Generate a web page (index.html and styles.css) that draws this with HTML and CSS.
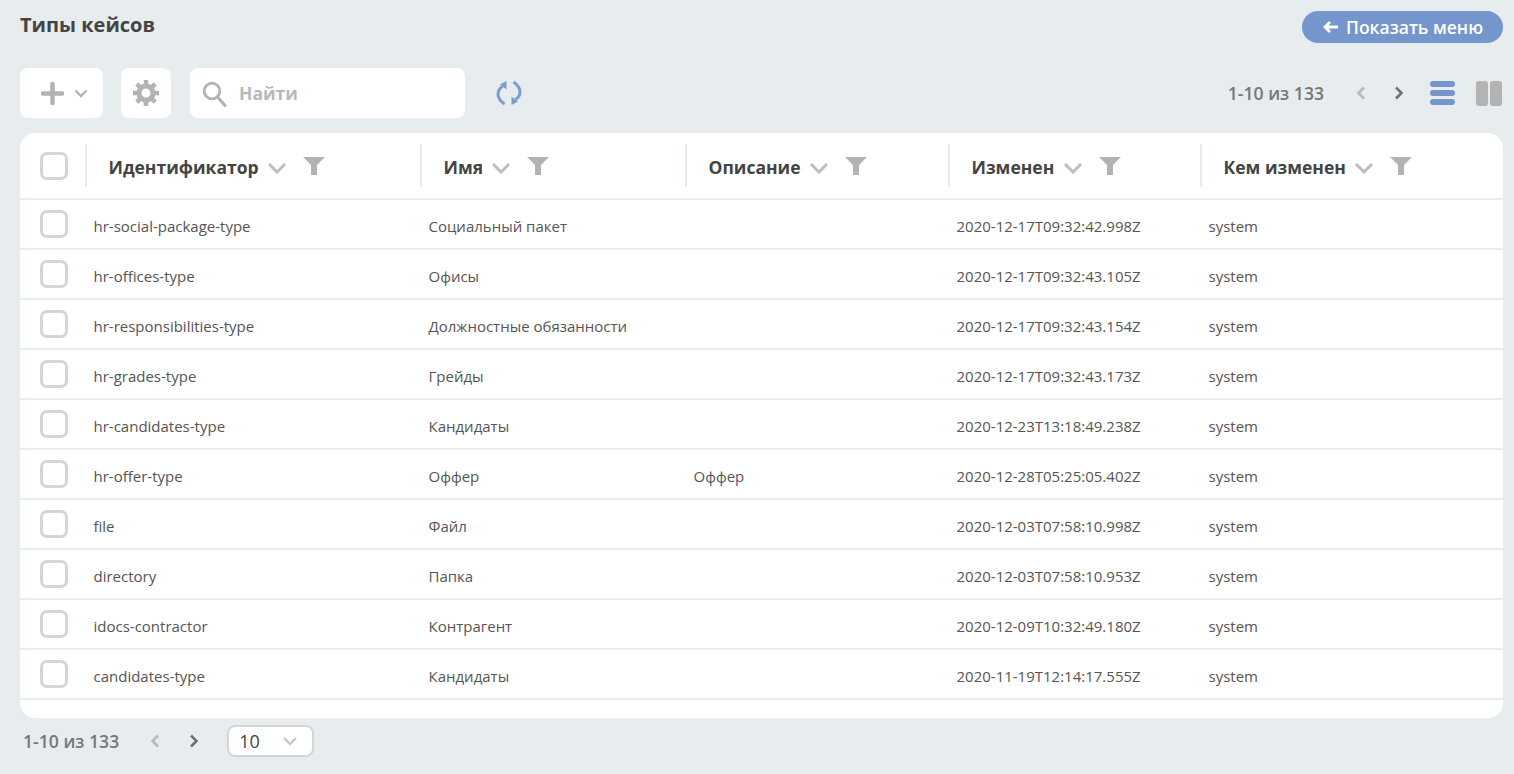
FILE: index.html
```html
<!doctype html>
<html lang="ru">
<head>
<meta charset="utf-8">
<title>Типы кейсов</title>
<link rel="stylesheet" href="styles.css">
</head>
<body>
<div class="topBar">
  <h1 class="pageTitle">Типы кейсов</h1>
  <button class="menuBtn"><svg width="16" height="14" viewBox="0 0 16 14"><path d="M7 2L2 7l5 5M2.500 7H15" fill="none" stroke="#fff" stroke-width="2.800"/></svg>Показать меню</button>
</div>

<div class="toolbar">
  <div class="toolBtn addBtn">
    <svg width="23" height="23" viewBox="0 0 23 23"><path d="M11.500 2v19M2 11.500h19" stroke="#b3b3b3" stroke-width="4.500" stroke-linecap="round"/></svg>
    <svg width="14" height="9" viewBox="0 0 14 9"><path d="M1.500 1.500L7 7l5.500-5.500" fill="none" stroke="#b3b3b3" stroke-width="2.400"/></svg>
  </div>
  <div class="toolBtn gearBtn">
    <svg width="26" height="26" viewBox="0 0 26 26"><circle cx="13" cy="13" r="7" fill="none" stroke="#b3b3b3" stroke-width="5"/><path d="M13 0v26M0 13h26M3.800 3.800l18.400 18.400M22.200 3.800L3.800 22.200" stroke="#b3b3b3" stroke-width="4.500" stroke-dasharray="5 16"/></svg>
  </div>
  <div class="searchBox">
    <svg width="26" height="28" viewBox="0 0 26 28"><circle cx="10" cy="12" r="7.800" fill="none" stroke="#b3b3b3" stroke-width="2.800"/><path d="M15.500 18l7.500 8.500" stroke="#b3b3b3" stroke-width="3" stroke-linecap="round"/></svg>
    <span class="searchHint">Найти</span>
  </div>
  <svg class="reload" width="26" height="26" viewBox="0 0 26 26"><path d="M6.500 6.500C3.500 8.500 2 11 2 14c0 3.800 2.500 7.300 6.500 10" fill="none" stroke="#7b9ccf" stroke-width="3"/><path d="M10.500 1v8.500L4 4.500z" fill="#7b9ccf"/><path d="M19.500 19.500c3-2 4.500-4.500 4.500-7.500 0-3.800-2.500-7.300-6.500-10" fill="none" stroke="#7b9ccf" stroke-width="3"/><path d="M15.500 25v-8.500l6.500 5z" fill="#7b9ccf"/></svg>
  <div class="toolRight">
    <span class="pageInfo">1-10 из 133</span>
    <div class="pageArrows">
      <svg width="10" height="14" viewBox="0 0 10 14"><path d="M8 1.500L2.500 7 8 12.500" fill="none" stroke="#b9b9b9" stroke-width="2.500"/></svg>
      <svg width="10" height="14" viewBox="0 0 10 14"><path d="M2 1.500L7.500 7 2 12.500" fill="none" stroke="#6f6f6f" stroke-width="2.500"/></svg>
    </div>
    <div class="viewList"><i></i><i></i><i></i></div>
    <div class="viewCols"><i></i><i></i></div>
  </div>
</div>

<div class="card">
  <table class="grid">
    <colgroup><col class="c0"><col class="c1"><col class="c2"><col class="c3"><col class="c4"><col></colgroup>
    <thead>
      <tr>
        <th><span class="check"></span></th>
        <th><div class="head">Идентификатор <svg class="chev" width="20" height="12" viewBox="0 0 20 12"><path d="M2 2l8 8 8-8" fill="none" stroke="#bdbdbd" stroke-width="3"/></svg><svg class="funnel" width="22" height="18" viewBox="0 0 22 18"><path d="M0 0h22l-8 8v10H8V8z" fill="#b3b3b3"/></svg></div></th>
        <th><div class="head">Имя <svg class="chev" width="20" height="12" viewBox="0 0 20 12"><path d="M2 2l8 8 8-8" fill="none" stroke="#bdbdbd" stroke-width="3"/></svg><svg class="funnel" width="22" height="18" viewBox="0 0 22 18"><path d="M0 0h22l-8 8v10H8V8z" fill="#b3b3b3"/></svg></div></th>
        <th><div class="head">Описание <svg class="chev" width="20" height="12" viewBox="0 0 20 12"><path d="M2 2l8 8 8-8" fill="none" stroke="#bdbdbd" stroke-width="3"/></svg><svg class="funnel" width="22" height="18" viewBox="0 0 22 18"><path d="M0 0h22l-8 8v10H8V8z" fill="#b3b3b3"/></svg></div></th>
        <th><div class="head">Изменен <svg class="chev" width="20" height="12" viewBox="0 0 20 12"><path d="M2 2l8 8 8-8" fill="none" stroke="#bdbdbd" stroke-width="3"/></svg><svg class="funnel" width="22" height="18" viewBox="0 0 22 18"><path d="M0 0h22l-8 8v10H8V8z" fill="#b3b3b3"/></svg></div></th>
        <th><div class="head">Кем изменен <svg class="chev" width="20" height="12" viewBox="0 0 20 12"><path d="M2 2l8 8 8-8" fill="none" stroke="#bdbdbd" stroke-width="3"/></svg><svg class="funnel" width="22" height="18" viewBox="0 0 22 18"><path d="M0 0h22l-8 8v10H8V8z" fill="#b3b3b3"/></svg></div></th>
      </tr>
    </thead>
    <tbody>
      <tr><td><span class="check"></span></td><td>hr-social-package-type</td><td>Социальный пакет</td><td></td><td>2020-12-17T09:32:42.998Z</td><td>system</td></tr>
      <tr><td><span class="check"></span></td><td>hr-offices-type</td><td>Офисы</td><td></td><td>2020-12-17T09:32:43.105Z</td><td>system</td></tr>
      <tr><td><span class="check"></span></td><td>hr-responsibilities-type</td><td>Должностные обязанности</td><td></td><td>2020-12-17T09:32:43.154Z</td><td>system</td></tr>
      <tr><td><span class="check"></span></td><td>hr-grades-type</td><td>Грейды</td><td></td><td>2020-12-17T09:32:43.173Z</td><td>system</td></tr>
      <tr><td><span class="check"></span></td><td>hr-candidates-type</td><td>Кандидаты</td><td></td><td>2020-12-23T13:18:49.238Z</td><td>system</td></tr>
      <tr><td><span class="check"></span></td><td>hr-offer-type</td><td>Оффер</td><td>Оффер</td><td>2020-12-28T05:25:05.402Z</td><td>system</td></tr>
      <tr><td><span class="check"></span></td><td>file</td><td>Файл</td><td></td><td>2020-12-03T07:58:10.998Z</td><td>system</td></tr>
      <tr><td><span class="check"></span></td><td>directory</td><td>Папка</td><td></td><td>2020-12-03T07:58:10.953Z</td><td>system</td></tr>
      <tr><td><span class="check"></span></td><td>idocs-contractor</td><td>Контрагент</td><td></td><td>2020-12-09T10:32:49.180Z</td><td>system</td></tr>
      <tr><td><span class="check"></span></td><td>candidates-type</td><td>Кандидаты</td><td></td><td>2020-11-19T12:14:17.555Z</td><td>system</td></tr>
    </tbody>
  </table>
</div>

<div class="footer">
  <span class="pageInfo">1-10 из 133</span>
  <div class="pageArrows">
    <svg width="10" height="14" viewBox="0 0 10 14"><path d="M8 1.500L2.500 7 8 12.500" fill="none" stroke="#b9b9b9" stroke-width="2.500"/></svg>
    <svg width="10" height="14" viewBox="0 0 10 14"><path d="M2 1.500L7.500 7 2 12.500" fill="none" stroke="#6f6f6f" stroke-width="2.500"/></svg>
  </div>
  <div class="pageSize">10<svg width="16" height="10" viewBox="0 0 16 10"><path d="M2 2l6 6 6-6" fill="none" stroke="#c4c4c4" stroke-width="2.200"/></svg></div>
</div>
</body>
</html>
```

FILE: styles.css
```css
html, body {
	margin: 0;
	height: 100%;
}
body {
	background: #e7ecef;
	padding: 0 11px 0 20px;
	font-family: "Open Sans", sans-serif;
	color: #444;
	overflow: hidden;
}
.topBar {
	display: flex;
	justify-content: space-between;
	align-items: flex-start;
	height: 68px;
	padding-top: 11px;
	box-sizing: border-box;
}
.pageTitle {
	margin: 0;
	font-size: 20px;
	line-height: 28px;
	font-weight: 700;
	color: #444;
}
.menuBtn {
	display: flex;
	align-items: center;
	gap: 7px;
	width: 201px;
	height: 32px;
	padding: 0 0 0 21px;
	border: 0;
	border-radius: 16px;
	background: #7596cc;
	color: #fff;
	font-family: inherit;
	font-size: 17.5px;
	font-weight: 600;
}
.toolbar {
	display: flex;
	align-items: center;
	height: 50px;
}
.toolBtn {
	display: flex;
	align-items: center;
	justify-content: center;
	height: 50px;
	background: #fff;
	border-radius: 8px;
}
.addBtn {
	width: 83px;
	gap: 10px;
	padding-left: 5px;
	box-sizing: border-box;
}
.gearBtn {
	width: 50px;
	margin-left: 18px;
}
.searchBox {
	display: flex;
	align-items: center;
	width: 275px;
	height: 50px;
	margin-left: 19px;
	padding-left: 12px;
	box-sizing: border-box;
	background: #fff;
	border-radius: 8px;
}
.searchHint {
	margin-left: 11px;
	font-size: 17.5px;
	font-weight: 700;
	color: #b9b9b9;
}
.reload {
	margin-left: 31px;
}
.toolRight {
	display: flex;
	align-items: center;
	margin-left: auto;
	margin-right: 1px;
}
.pageInfo {
	font-size: 17.6px;
	font-weight: 600;
	color: #777;
}
.pageArrows {
	display: flex;
	align-items: center;
	gap: 28px;
	margin-left: 32px;
}
.footer .pageArrows {
	gap: 29px;
	margin-left: 31px;
}
.viewList {
	display: flex;
	flex-direction: column;
	gap: 3px;
	margin-left: 26px;
}
.viewList i {
	display: block;
	width: 25px;
	height: 6px;
	border-radius: 3px;
	background: #7596cc;
}
.viewCols {
	display: flex;
	gap: 2px;
	margin-left: 21px;
}
.viewCols i {
	display: block;
	width: 12px;
	height: 25px;
	border-radius: 3px;
	background: #b3b3b3;
}
.card {
	height: 585px;
	margin-top: 15px;
	background: #fff;
	border-radius: 15px;
	overflow: hidden;
}
.grid {
	width: 100%;
	table-layout: fixed;
	border-collapse: collapse;
}
.c0 { width: 66px; }
.c1 { width: 335px; }
.c2 { width: 265px; }
.c3 { width: 263px; }
.c4 { width: 252px; }
.grid th {
	height: 65px;
	padding: 0;
	text-align: left;
	border-bottom: 2px solid #e7ecef;
}
.grid td {
	padding: 3px 0 0 7.5px;
	box-sizing: border-box;
	height: 50px;
	font-size: 15px;
	color: #555;
	border-bottom: 2px solid #e7ecef;
}
.grid th:first-child,
.grid td:first-child {
	padding: 0 0 0 20px;
}
.head {
	display: flex;
	align-items: center;
	height: 43px;
	margin-left: -1px;
	padding: 2px 0 0 21.5px;
	box-sizing: border-box;
	border-left: 2px solid #e7ecef;
	font-size: 17.5px;
	font-weight: 700;
	color: #444;
	white-space: nowrap;
}
.chev {
	margin-left: 8.400px;
	margin-top: 2px;
}
.funnel {
	margin-left: 16px;
	margin-top: -2px;
}
.check {
	display: block;
	width: 28px;
	height: 28px;
	box-sizing: border-box;
	border: 3px solid #d5d5d5;
	border-radius: 7px;
	background: #fff;
}
.footer {
	display: flex;
	align-items: center;
	height: 46px;
	padding-left: 3px;
}
.footer .pageSize {
	display: flex;
	align-items: center;
	justify-content: space-between;
	width: 87px;
	height: 32px;
	margin-left: 28px;
	padding: 0 14px 0 10px;
	box-sizing: border-box;
	background: #fff;
	border: 2px solid #d5d5d5;
	border-radius: 8px;
	font-size: 18px;
	color: #444;
}
```
